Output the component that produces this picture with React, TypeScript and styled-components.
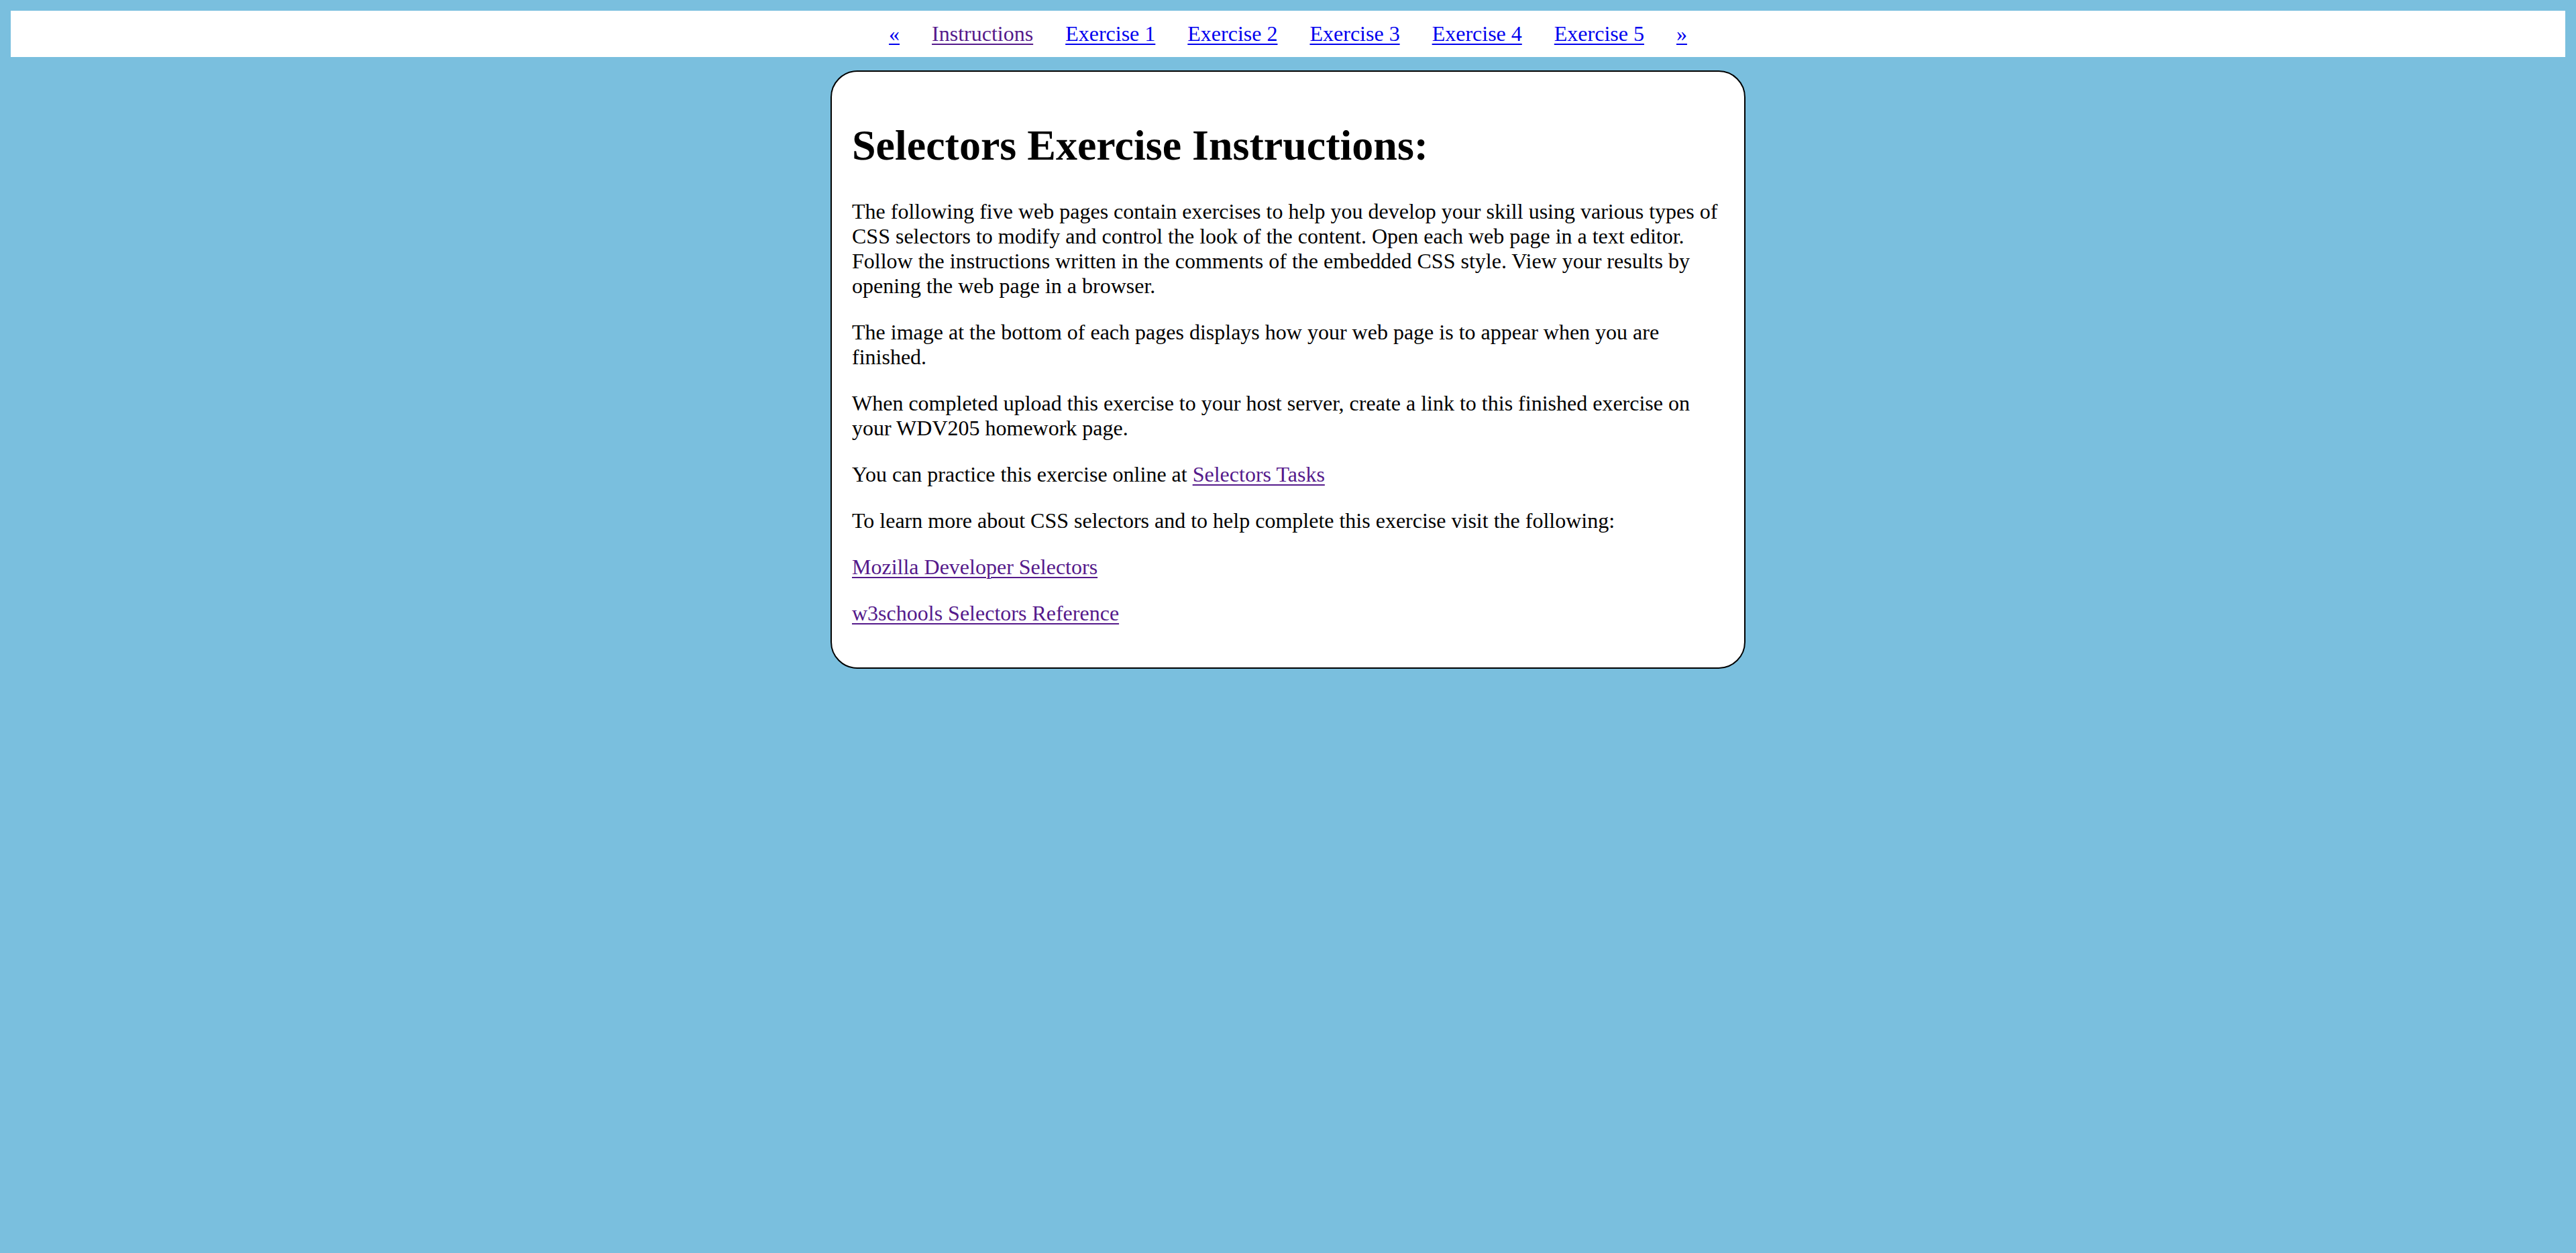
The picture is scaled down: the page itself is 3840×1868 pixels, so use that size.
import React from "react";
import styled, { createGlobalStyle } from "styled-components";

const GlobalStyle = createGlobalStyle`
  html, body {
    margin: 0;
    padding: 0;
  }
  body {
    background: #7abfde;
    font-family: "Liberation Serif", "Times New Roman", serif;
    font-size: 32px;
    color: #000;
    padding: 16px;
  }
`;

const NavBar = styled.nav`
  background: #ffffff;
  display: flex;
  justify-content: center;
  align-items: center;
  gap: 48px;
  padding: 16px 0;
  line-height: normal;
`;

const Link = styled.a<{ $visited?: boolean }>`
  color: ${(p) => (p.$visited ? "#551a8b" : "#0000ee")};
  text-decoration: underline;
  text-decoration-thickness: 2px;
  text-underline-offset: 4px;
  cursor: pointer;
`;

const Card = styled.main`
  width: 1300px;
  margin: 20px auto 0;
  padding: 30px;
  background: #ffffff;
  border: 2px solid #000;
  border-radius: 40px;
  display: flow-root;
`;

const Heading = styled.h1`
  font-size: 64px;
  font-weight: bold;
  margin: 42.88px 0;
`;

const Para = styled.p`
  margin: 32px 0;
  line-height: normal;
`;

const navItems = [
  { label: "«", visited: false },
  { label: "Instructions", visited: true },
  { label: "Exercise 1", visited: false },
  { label: "Exercise 2", visited: false },
  { label: "Exercise 3", visited: false },
  { label: "Exercise 4", visited: false },
  { label: "Exercise 5", visited: false },
  { label: "»", visited: false },
];

export default function App() {
  return (
    <>
      <GlobalStyle />
      <NavBar>
        {navItems.map((item) => (
          <Link key={item.label} $visited={item.visited}>
            {item.label}
          </Link>
        ))}
      </NavBar>
      <Card>
        <Heading>Selectors Exercise Instructions:</Heading>
        <Para>
          The following five web pages contain exercises to help you develop your skill using various types of
          CSS selectors to modify and control the look of the content. Open each web page in a text editor.
          Follow the instructions written in the comments of the embedded CSS style. View your results by
          opening the web page in a browser.
        </Para>
        <Para>
          The image at the bottom of each pages displays how your web page is to appear when you are finished.
        </Para>
        <Para>
          When completed upload this exercise to your host server, create a link to this finished exercise on
          your WDV205 homework page.
        </Para>
        <Para>
          You can practice this exercise online at <Link $visited>Selectors Tasks</Link>
        </Para>
        <Para>To learn more about CSS selectors and to help complete this exercise visit the following:</Para>
        <Para>
          <Link $visited>Mozilla Developer Selectors</Link>
        </Para>
        <Para>
          <Link $visited>w3schools Selectors Reference</Link>
        </Para>
      </Card>
    </>
  );
}
